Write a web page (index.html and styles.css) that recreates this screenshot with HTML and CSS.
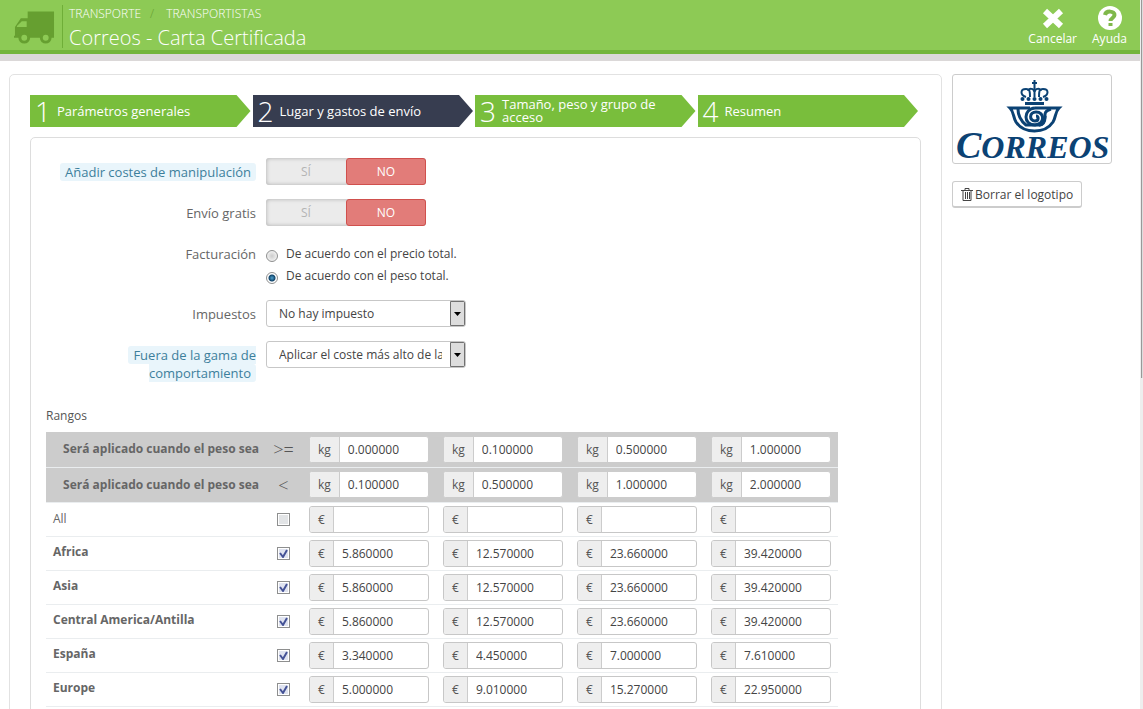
FILE: index.html
```html
<!DOCTYPE html>
<html lang="es">
<head>
    <meta charset="UTF-8">
    <meta name="viewport" content="width=device-width, initial-scale=1.0">
    <title>Correos - Carta Certificada</title>
    <link rel="stylesheet" href="styles.css">
</head>
<body>
<div class="page">
    <header class="page-head">
        <svg class="truck" viewBox="0 0 42 34" aria-hidden="true">
            <path fill="#669f30" fill-rule="evenodd" d="M14 0h27v27H0v-2h1v-9L7 7h7zM13 10H8l-5 5v1h10z"/>
            <circle cx="10.500" cy="27" r="6" fill="#669f30"/>
            <circle cx="32.500" cy="27" r="6" fill="#669f30"/>
            <circle cx="10.500" cy="27" r="3" fill="#8dca55"/>
            <circle cx="32.500" cy="27" r="3" fill="#8dca55"/>
        </svg>
        <div class="head-text">
            <nav class="breadcrumb">
                <a href="#">TRANSPORTE</a>
                <span class="slash">/</span>
                <a href="#">TRANSPORTISTAS</a>
            </nav>
            <h1>Correos - Carta Certificada</h1>
        </div>
        <div class="toolbar">
            <a href="#" class="tool">
                <svg viewBox="0 0 24 24" width="24" height="24" aria-hidden="true">
                    <path stroke="#fff" stroke-width="6" d="M4 5l16 15M20 5L4 20"/>
                </svg>
                <span>Cancelar</span>
            </a>
            <a href="#" class="tool">
                <svg viewBox="0 0 24 24" width="24" height="24" aria-hidden="true">
                    <circle cx="12" cy="12" r="12" fill="#fff"/>
                    <path fill="none" stroke="#7fb84a" stroke-width="4" d="M7 9c1-5 10-4 9.500 0 0 3-4 3-4 6"/>
                    <path fill="#7fb84a" d="M10.500 17h4v3h-4z"/>
                </svg>
                <span>Ayuda</span>
            </a>
        </div>
    </header>

    <div class="content">
        <main class="panel">
            <ol class="steps">
                <li class="step"><span class="num">1</span><a href="#">Parámetros generales</a></li>
                <li class="step selected"><span class="num">2</span><a href="#">Lugar y gastos de envío</a></li>
                <li class="step"><span class="num">3</span><a href="#">Tamaño, peso y grupo de acceso</a></li>
                <li class="step"><span class="num">4</span><a href="#">Resumen</a></li>
            </ol>

            <form class="step-body">
                <div class="row">
                    <div class="label"><span class="hint">Añadir costes de manipulación</span></div>
                    <div class="switch">
                        <input type="radio" name="handling" id="handling_on">
                        <label for="handling_on">SÍ</label>
                        <input type="radio" name="handling" id="handling_off" checked>
                        <label for="handling_off">NO</label>
                    </div>
                </div>
                <div class="row">
                    <div class="label">Envío gratis</div>
                    <div class="switch">
                        <input type="radio" name="free" id="free_on">
                        <label for="free_on">SÍ</label>
                        <input type="radio" name="free" id="free_off" checked>
                        <label for="free_off">NO</label>
                    </div>
                </div>
                <div class="row">
                    <div class="label">Facturación</div>
                    <div class="radios">
                        <label><input type="radio" name="billing">De acuerdo con el precio total.</label>
                        <label><input type="radio" name="billing" checked>De acuerdo con el peso total.</label>
                    </div>
                </div>
                <div class="row">
                    <label class="label" for="tax">Impuestos</label>
                    <select id="tax"><option>No hay impuesto</option></select>
                </div>
                <div class="row">
                    <label class="label" for="range_behavior"><span class="hint">Fuera de la gama de comportamiento</span></label>
                    <select id="range_behavior"><option>Aplicar el coste más alto de la gama definida</option></select>
                </div>

                <h2>Rangos</h2>
                <table class="ranges">
                    <colgroup>
                        <col class="col-zone"><col class="col-check"><col class="col-fee"><col class="col-fee"><col class="col-fee"><col class="col-fee">
                    </colgroup>
                    <thead>
                    <tr>
                        <th>Será aplicado cuando el peso sea</th>
                        <td class="sign">&gt;=</td>
                        <td><div class="group"><span>kg</span><input type="text" aria-label="Desde 1" value="0.000000"></div></td>
                        <td><div class="group"><span>kg</span><input type="text" aria-label="Desde 2" value="0.100000"></div></td>
                        <td><div class="group"><span>kg</span><input type="text" aria-label="Desde 3" value="0.500000"></div></td>
                        <td><div class="group"><span>kg</span><input type="text" aria-label="Desde 4" value="1.000000"></div></td>
                    </tr>
                    <tr>
                        <th>Será aplicado cuando el peso sea</th>
                        <td class="sign">&lt;</td>
                        <td><div class="group"><span>kg</span><input type="text" aria-label="Hasta 1" value="0.100000"></div></td>
                        <td><div class="group"><span>kg</span><input type="text" aria-label="Hasta 2" value="0.500000"></div></td>
                        <td><div class="group"><span>kg</span><input type="text" aria-label="Hasta 3" value="1.000000"></div></td>
                        <td><div class="group"><span>kg</span><input type="text" aria-label="Hasta 4" value="2.000000"></div></td>
                    </tr>
                    </thead>
                    <tbody>
                    <tr class="all">
                        <th><label for="zone_all">All</label></th>
                        <td class="check"><input type="checkbox" id="zone_all"></td>
                        <td><div class="group"><span>€</span><input type="text" aria-label="All 1"></div></td>
                        <td><div class="group"><span>€</span><input type="text" aria-label="All 2"></div></td>
                        <td><div class="group"><span>€</span><input type="text" aria-label="All 3"></div></td>
                        <td><div class="group"><span>€</span><input type="text" aria-label="All 4"></div></td>
                    </tr>
                    <tr>
                        <th><label for="zone_africa">Africa</label></th>
                        <td class="check"><input type="checkbox" id="zone_africa" checked></td>
                        <td><div class="group"><span>€</span><input type="text" aria-label="Africa 1" value="5.860000"></div></td>
                        <td><div class="group"><span>€</span><input type="text" aria-label="Africa 2" value="12.570000"></div></td>
                        <td><div class="group"><span>€</span><input type="text" aria-label="Africa 3" value="23.660000"></div></td>
                        <td><div class="group"><span>€</span><input type="text" aria-label="Africa 4" value="39.420000"></div></td>
                    </tr>
                    <tr>
                        <th><label for="zone_asia">Asia</label></th>
                        <td class="check"><input type="checkbox" id="zone_asia" checked></td>
                        <td><div class="group"><span>€</span><input type="text" aria-label="Asia 1" value="5.860000"></div></td>
                        <td><div class="group"><span>€</span><input type="text" aria-label="Asia 2" value="12.570000"></div></td>
                        <td><div class="group"><span>€</span><input type="text" aria-label="Asia 3" value="23.660000"></div></td>
                        <td><div class="group"><span>€</span><input type="text" aria-label="Asia 4" value="39.420000"></div></td>
                    </tr>
                    <tr>
                        <th><label for="zone_central">Central America/Antilla</label></th>
                        <td class="check"><input type="checkbox" id="zone_central" checked></td>
                        <td><div class="group"><span>€</span><input type="text" aria-label="Central America 1" value="5.860000"></div></td>
                        <td><div class="group"><span>€</span><input type="text" aria-label="Central America 2" value="12.570000"></div></td>
                        <td><div class="group"><span>€</span><input type="text" aria-label="Central America 3" value="23.660000"></div></td>
                        <td><div class="group"><span>€</span><input type="text" aria-label="Central America 4" value="39.420000"></div></td>
                    </tr>
                    <tr>
                        <th><label for="zone_spain">España</label></th>
                        <td class="check"><input type="checkbox" id="zone_spain" checked></td>
                        <td><div class="group"><span>€</span><input type="text" aria-label="España 1" value="3.340000"></div></td>
                        <td><div class="group"><span>€</span><input type="text" aria-label="España 2" value="4.450000"></div></td>
                        <td><div class="group"><span>€</span><input type="text" aria-label="España 3" value="7.000000"></div></td>
                        <td><div class="group"><span>€</span><input type="text" aria-label="España 4" value="7.610000"></div></td>
                    </tr>
                    <tr>
                        <th><label for="zone_europe">Europe</label></th>
                        <td class="check"><input type="checkbox" id="zone_europe" checked></td>
                        <td><div class="group"><span>€</span><input type="text" aria-label="Europe 1" value="5.000000"></div></td>
                        <td><div class="group"><span>€</span><input type="text" aria-label="Europe 2" value="9.010000"></div></td>
                        <td><div class="group"><span>€</span><input type="text" aria-label="Europe 3" value="15.270000"></div></td>
                        <td><div class="group"><span>€</span><input type="text" aria-label="Europe 4" value="22.950000"></div></td>
                    </tr>
                    </tbody>
                </table>
            </form>
        </main>

        <aside class="side">
            <div class="logo">
                <svg viewBox="0 0 158 88" role="img" aria-label="Correos">
                    <!-- crown -->
                    <g fill="none" stroke="#0b4274" stroke-width="2">
                        <path d="M81.500 5v8M79 8h5M81.500 13v9"/>
                        <path d="M73 22c-6-2-6-8 0-8 4 0 4 3 4 8M75 16c1-3 6-3 6.500 1M90 22c6-2 6-8 0-8-4 0-4 3-4 8M88 16c-1-3-6-3-6.500 1"/>
                    </g>
                    <g fill="#0b4274">
                        <circle cx="69.500" cy="24" r="2"/>
                        <circle cx="75.500" cy="24" r="2"/>
                        <circle cx="81.500" cy="24" r="2"/>
                        <circle cx="87.500" cy="24" r="2"/>
                        <circle cx="93.500" cy="24" r="2"/>
                        <path d="M72 27h19v3H72z"/>
                    </g>
                    <!-- post horn -->
                    <g fill="none" stroke="#0b4274" stroke-width="3">
                        <path d="M77 33H57c4 4 3 9 6 14 8 12 29 12 37 0 3-5 2-10 6-14H82"/>
                        <path d="M65 34c0 6 3 12 8 16h14c4-2 5-6 5-9"/>
                        <path d="M98 34c-7 2-6 5-6 8 0 4-1 8-6 8"/>
                        <path d="M82 33c-12 1-12 17 0 17 10-1 10-13 1-13-7 0-7 9-1 9 4 0 4-5 1-5"/>
                    </g>
                    <text class="logo-text" x="3" y="83"><tspan class="logo-cap">C</tspan>ORREOS</text>
                </svg>
            </div>
            <button type="button" class="btn">
                <svg viewBox="0 0 12 13" width="12" height="13" aria-hidden="true">
                    <path fill="none" stroke="#444" d="M0 2.500h12M4 2.500v-2h4v2M2 2.500v10h8v-10M4.500 4v7M6.500 4v7M8.500 4v7"/>
                </svg>
                Borrar el logotipo
            </button>
        </aside>
    </div>
</div>
<div class="track"><div class="thumb"></div></div>
</body>
</html>
```
FILE: styles.css
```css
* {
    box-sizing: border-box;
}

body {
    margin: 0;
    height: 100vh;
    overflow: hidden;
    display: flex;
    font-family: "Open Sans", sans-serif;
    font-size: 12px;
    color: #555;
    background-color: #fff;
}

a {
    color: inherit;
    text-decoration: none;
}

input, select, button {
    font-family: inherit;
    font-size: 12px;
    color: #444;
}

.page {
    flex: 1;
    min-width: 0;
    overflow: hidden;
}

/* header */
.page-head {
    display: flex;
    height: 61px;
    padding: 5px 13px 0 14px;
    background-color: #8dca55;
    border-bottom: 7px solid #dbd8d8;
    box-shadow: inset 0 -4px #73b53b;
    color: #fff;
}

.truck {
    width: 41px;
    height: 34px;
    margin-top: 6px;
}

.head-text {
    margin-left: 7px;
    padding-left: 6px;
    height: 43px;
    border-left: 1px solid #6fae38;
}

.breadcrumb {
    display: flex;
    gap: 9px;
    line-height: 18px;
    font-weight: 300;
}

.slash {
    color: #669f30;
    margin-right: 3px;
}

h1 {
    margin: 0;
    font-size: 20px;
    line-height: 30px;
    font-weight: 300;
}

.toolbar {
    display: flex;
    gap: 15px;
    margin-left: auto;
    padding-top: 1px;
}

.tool {
    display: flex;
    flex-direction: column;
    align-items: center;
    line-height: 18px;
}

/* layout */
.content {
    display: flex;
    align-items: flex-start;
    gap: 10px;
    padding: 13px 0 0 9px;
}

.panel {
    flex: 1;
    min-width: 0;
    padding: 20px;
    border: 1px solid #e2e2e2;
    border-radius: 5px;
}

.side {
    width: 188px;
}

/* wizard steps */
.steps {
    display: grid;
    grid-template-columns: repeat(4, 1fr);
    gap: 2px;
    margin: 0 0 10px;
    padding: 0 3px 0 0;
    list-style: none;
}

.step {
    display: flex;
    align-items: center;
    height: 32px;
    padding: 0 24px 0 5px;
    background-color: #79be3c;
    color: #fff;
    line-height: 13px;
    font-size: 13px;
    clip-path: polygon(0 0, calc(100% - 14px) 0, 100% 50%, calc(100% - 14px) 100%, 0 100%);
}

.step.selected {
    background-color: #373d50;
}

.num {
    flex: none;
    width: 22px;
    font-size: 28px;
    line-height: 32px;
    font-weight: 300;
}

.step-body {
    padding: 20px 15px 40px;
    border: 1px solid #ddd;
    border-radius: 5px;
}

/* form rows */
.row {
    display: grid;
    grid-template-columns: 210px 1fr;
    gap: 10px;
    margin-bottom: 14px;
}

.label {
    padding-top: 5px;
    font-size: 13px;
    line-height: 18px;
    color: #666;
    text-align: right;
}

.hint {
    padding: 0 5px;
    border-radius: 3px;
    background-color: #e9f5fb;
    color: #3d7f9b;
}

.switch {
    display: flex;
    width: 160px;
    height: 27px;
    border-radius: 3px;
    background-color: #ebebeb;
    box-shadow: inset 0 0 4px #aaa;
}

.switch input {
    position: absolute;
    opacity: 0;
}

.switch label {
    flex: 1;
    line-height: 25px;
    text-align: center;
    color: #b4b4b4;
    border: 1px solid transparent;
    border-radius: 3px;
}

.switch input:checked + label {
    background-color: #e27c79;
    border-color: #d0504d;
    color: #fff;
}

.radios {
    padding: 2px 0 0;
}

.radios label {
    display: flex;
    gap: 8px;
    height: 22px;
    line-height: 24px;
    color: #444;
}

.radios input {
    appearance: none;
    width: 12px;
    height: 12px;
    margin: 8px 0 0;
    border: 1px solid #8e8f8f;
    border-radius: 50%;
    background: radial-gradient(#ccc, #fff);
}

.radios input:checked {
    background: radial-gradient(#4fa3d0 0, #12456b 3px, #fff 4px);
}

select {
    appearance: none;
    width: 200px;
    height: 27px;
    padding: 0 23px 0 12px;
    border: 1px solid #c7c7c7;
    border-radius: 3px;
    background: #fff url("data:image/svg+xml,%3Csvg xmlns='http://www.w3.org/2000/svg' width='15' height='25'%3E%3Cpath fill='%23ddd' stroke='%23707070' d='M.5.5h14v24H.5z'/%3E%3Cpath d='M4 11h7l-3.500 4z'/%3E%3C/svg%3E") no-repeat right center;
}

/* ranges */
h2 {
    margin: 24px 0 6px;
    font-size: 12px;
    line-height: 20px;
    font-weight: 400;
}

.ranges {
    width: 792px;
    table-layout: fixed;
    border-collapse: collapse;
}

.col-zone {
    width: 219px;
}

.col-check {
    width: 37px;
}

.col-fee {
    width: 134px;
}

.ranges th, .ranges td {
    height: 34px;
    padding: 0 7px;
    border-bottom: 1px solid #eaedef;
}

.ranges th {
    text-align: left;
    line-height: 16px;
    padding-bottom: 3px;
    color: #666;
}

.ranges .all th {
    font-weight: 400;
    padding-bottom: 0;
}

.ranges thead th, .ranges thead td {
    height: 35px;
    background-color: #ccc;
}

.ranges thead th {
    padding: 0 6px;
    text-align: right;
    white-space: nowrap;
}

.ranges .sign {
    padding: 0;
    font-size: 18px;
    font-weight: 300;
    text-align: center;
}

.ranges .check {
    padding: 0;
    text-align: center;
}

.check input {
    appearance: none;
    display: block;
    width: 13px;
    height: 13px;
    margin: 0 auto;
    border: 1px solid #8e8f8f;
    background: #e2e4e6;
    box-shadow: inset 0 0 0 1px #fff;
}

.check input:checked {
    background: #dfe3f0 url("data:image/svg+xml,%3Csvg xmlns='http://www.w3.org/2000/svg' width='11' height='11'%3E%3Cpath fill='none' stroke='%23445296' stroke-width='2' d='M2 5l3 4 4-7'/%3E%3C/svg%3E") center;
}

.group {
    display: flex;
    height: 27px;
    border: 1px solid #c7c7c7;
    border-radius: 3px;
    background-color: #fff;
    overflow: hidden;
}

.group span {
    padding: 0 8px;
    line-height: 25px;
    border-right: 1px solid #ccc;
    background-color: #eee;
}

.group input {
    flex: 1;
    min-width: 0;
    padding: 0 8px;
    border: 0;
    background: none;
}

thead .group {
    border-color: #ccc;
}

/* side column */
.logo {
    width: 160px;
    height: 90px;
    border: 1px solid #ccc;
    border-radius: 3px;
}

.logo svg {
    display: block;
    overflow: visible;
}

.logo-text {
    font-family: "Liberation Serif", serif;
    font-size: 32px;
    font-style: italic;
    font-weight: 700;
    fill: #0b4274;
}

.logo-cap {
    font-size: 38px;
}

.btn {
    display: flex;
    align-items: center;
    gap: 2px;
    height: 27px;
    margin-top: 17px;
    padding: 0 8px;
    border: 1px solid #ccc;
    border-bottom-width: 2px;
    border-radius: 3px;
    background-color: #fff;
}

/* scroll bar */
.track {
    width: 3px;
    padding-left: 1px;
    background-color: #eee;
}

.thumb {
    height: 53.3%;
    background-color: #999;
    border-right: 1px solid #ddd;
}
```
